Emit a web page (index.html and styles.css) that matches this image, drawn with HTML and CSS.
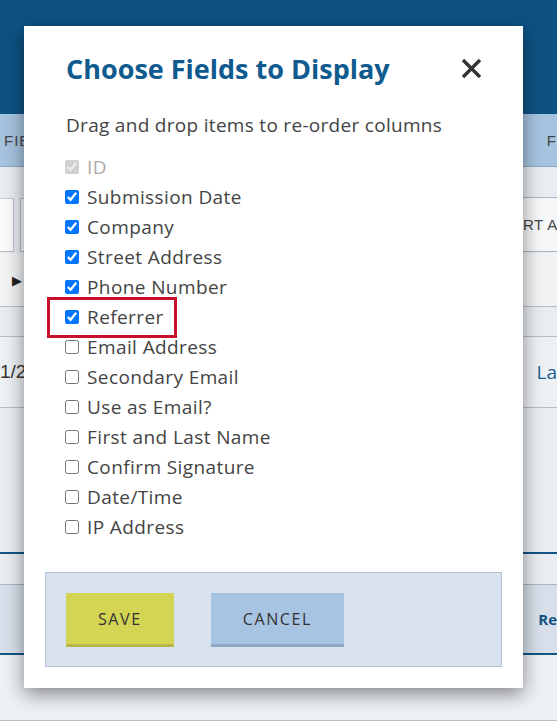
FILE: index.html
```html
<!DOCTYPE html>
<html lang="en">
<head>
<meta charset="utf-8">
<title>Choose Fields to Display</title>
<link rel="stylesheet" href="styles.css">
</head>
<body>
<div class="page">
  <div class="topbar"></div>
  <div class="toolbar">
    <span class="tool-left">FIELDS</span>
    <span class="tool-right">F</span>
  </div>
  <div class="band band-inputs">
    <div class="inputs-left">
      <span class="field-box field-box-a"></span>
      <span class="field-box field-box-b"></span>
    </div>
    <div class="inputs-right">
      <div class="right-top"></div>
      <div class="right-btn">RT A</div>
    </div>
  </div>
  <div class="band band-arrow">
    <span class="arrow">&#9654;</span>
  </div>
  <div class="band band-gap"></div>
  <div class="band band-data">
    <span class="date">1/20</span>
    <span class="link">La</span>
  </div>
  <div class="band band-empty"></div>
  <div class="band band-sub"></div>
  <div class="band band-foot">
    <span></span>
    <span class="foot-link">Re</span>
  </div>
  <div class="band band-last"></div>
</div>

<div class="modal">
  <div class="modal-head">
    <h1 class="modal-title">Choose Fields to Display</h1>
    <button class="close" aria-label="Close">
      <svg width="21" height="21" viewBox="0 0 21 21"><path d="M2 2 L19 19 M19 2 L2 19" stroke="#333" stroke-width="3.4" stroke-linecap="butt"/></svg>
    </button>
  </div>
  <p class="hint">Drag and drop items to re-order columns</p>
  <ul class="fields">
    <li class="field disabled"><input type="checkbox" checked disabled><span>ID</span></li>
    <li class="field"><input type="checkbox" checked><span>Submission Date</span></li>
    <li class="field"><input type="checkbox" checked><span>Company</span></li>
    <li class="field"><input type="checkbox" checked><span>Street Address</span></li>
    <li class="field"><input type="checkbox" checked><span>Phone Number</span></li>
    <li class="field highlighted"><input type="checkbox" checked><span>Referrer</span><i class="mark"></i></li>
    <li class="field"><input type="checkbox"><span>Email Address</span></li>
    <li class="field"><input type="checkbox"><span>Secondary Email</span></li>
    <li class="field"><input type="checkbox"><span>Use as Email?</span></li>
    <li class="field"><input type="checkbox"><span>First and Last Name</span></li>
    <li class="field"><input type="checkbox"><span>Confirm Signature</span></li>
    <li class="field"><input type="checkbox"><span>Date/Time</span></li>
    <li class="field"><input type="checkbox"><span>IP Address</span></li>
  </ul>
  <div class="actions">
    <button class="btn btn-save">SAVE</button>
    <button class="btn btn-cancel">CANCEL</button>
  </div>
</div>
</body>
</html>
```

FILE: styles.css
```css
* { box-sizing: border-box; }
html, body { margin: 0; padding: 0; }
body {
  width: 557px;
  height: 723px;
  overflow: hidden;
  background: #fff;
  font-family: "Open Sans", "Liberation Sans", sans-serif;
  position: relative;
}

/* background page */
.page { width: 557px; }
.topbar { height: 114px; background: #0d5283; }
.toolbar {
  height: 53px;
  background: #a6c3df;
  border-bottom: 1px solid #8ea9c4;
  display: flex;
  justify-content: space-between;
  align-items: center;
  padding: 0 0 0 4px;
  color: #444;
  font-size: 15px;
  letter-spacing: 1px;
  font-family: "Liberation Sans", sans-serif;
}
.tool-right { margin-right: 0; }
.band { display: flex; justify-content: space-between; align-items: center; background: #e9edf1; }
.band-inputs { height: 86px; align-items: stretch; }
.inputs-left { display: flex; gap: 6px; padding-top: 31px; height: 86px; }
.field-box { display: block; background: #fbfbfb; border: 1px solid #b9bec4; border-top: 1px solid #c5cacf; height: 54px; }
.field-box-a { width: 14px; border-left: 0; }
.field-box-b { width: 12px; }
.inputs-right { width: 34px; display: flex; flex-direction: column; }
.right-top { height: 31px; border-bottom: 1px solid #a9b6c4; }
.right-btn {
  height: 54px;
  background: #f6f7f8;
  border-bottom: 1px solid #a9b6c4;
  color: #444;
  font-family: "Liberation Sans", sans-serif;
  font-size: 15px;
  letter-spacing: 0.5px;
  white-space: nowrap;
  line-height: 54px;
  padding-left: 0;
}
.band-arrow { height: 54px; background: #f2f3f5; border-bottom: 1px solid #b5bcc4; padding-left: 12px; }
.arrow { font-size: 13px; color: #222; }
.band-gap { height: 30px; border-bottom: 1px solid #b5bcc4; }
.band-data { height: 71px; border-bottom: 1px solid #b5bcc4; font-size: 20px; background: #eef1f4; }
.date { color: #333; font-family: "Liberation Sans", sans-serif; font-size: 19px; }
.link { color: #1f5f93; font-family: "Open Sans", sans-serif; font-size: 19px; margin-right: 0; }
.band-empty { height: 146px; border-bottom: 2px solid #135587; }
.band-sub { height: 31px; border-bottom: 1px solid #aab6c3; }
.band-foot { height: 70px; background: #d7e0ea; border-bottom: 2px solid #135587; }
.foot-link { color: #144f80; font-weight: 700; font-size: 15px; margin-right: 0; font-family: "Open Sans", sans-serif; }
.band-last { height: 66px; background: #eef1f4; border-bottom: 1px solid #b4bfca; }

/* modal */
.modal {
  position: absolute;
  left: 24px;
  top: 26px;
  width: 499px;
  height: 662px;
  background: #fff;
  box-shadow: 0 6px 18px rgba(0, 0, 0, 0.45);
  padding: 22px 21px 21px 21px;
  display: flex;
  flex-direction: column;
  color: #444;
}
.modal-head {
  display: flex;
  justify-content: space-between;
  align-items: center;
  height: 40px;
  padding-left: 21px;
  padding-right: 20px;
}
.modal-title {
  margin: 0;
  font-size: 27px;
  font-weight: 700;
  color: #0f5a8e;
  letter-spacing: 0;
}
.close { background: none; border: 0; padding: 0; width: 21px; height: 21px; display: block; cursor: pointer; }
.close svg { display: block; }
.hint { margin: 22px 0 0 21px; font-size: 19px; letter-spacing: 0.3px; line-height: 30px; color: #444; }
.fields { list-style: none; margin: 12px 0 0 20px; padding: 0; }
.field {
  height: 30px;
  display: flex;
  align-items: center;
  gap: 8px;
  font-size: 19px;
  letter-spacing: 0.4px;
  color: #444;
  position: relative;
}
.field input { margin: 0; width: 14px; height: 14px; accent-color: #0075ff; }
.field.disabled { color: #aaa; }
.mark {
  position: absolute;
  left: -18px;
  top: -5px;
  width: 130px;
  height: 41px;
  border: 3px solid #c8102e;
}
.actions {
  margin-top: auto;
  height: 95px;
  background: #d9e3ef;
  border: 1px solid #b1c1d4;
  padding: 20px 20px;
  display: flex;
  gap: 37px;
}
.btn {
  height: 54px;
  border: 0;
  padding: 0 32px;
  font-family: "Open Sans", sans-serif;
  font-size: 16px;
  letter-spacing: 1.6px;
  color: #333;
  cursor: pointer;
}
.btn-save { background: #d4d455; border-bottom: 3px solid #b7b745; }
.btn-cancel { background: #a7c5e2; border-bottom: 3px solid #8da9c5; }
```
